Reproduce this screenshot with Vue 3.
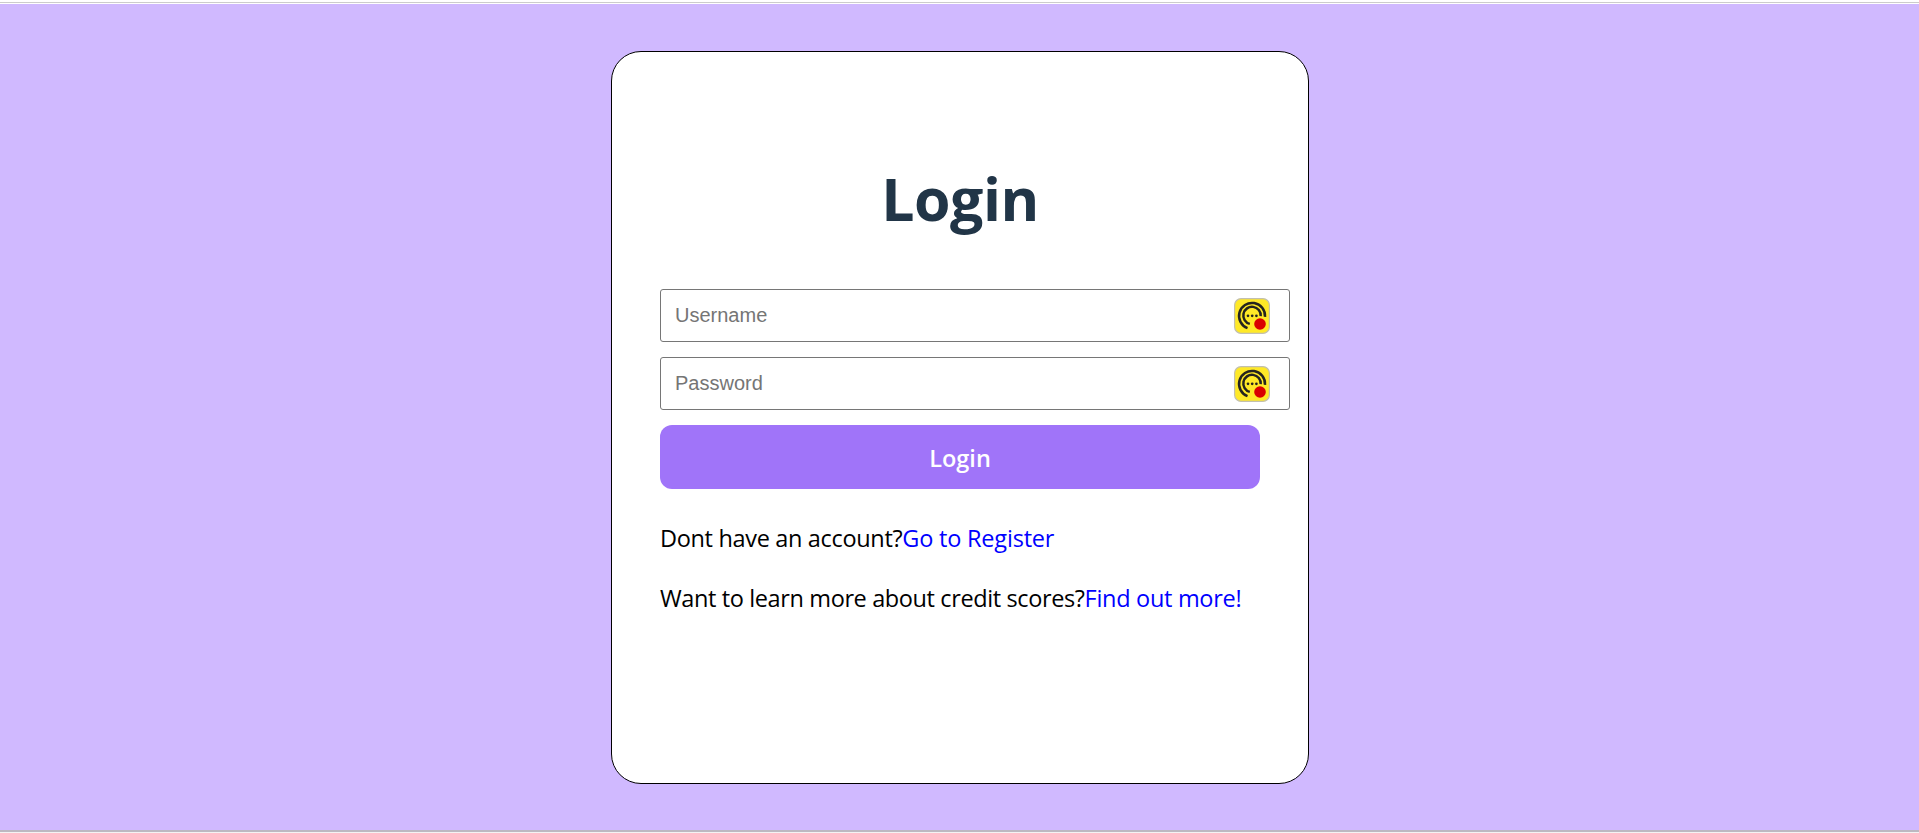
<template>
  <div class="page">
    <div class="login-card">
      <h1>Login</h1>
      <form @submit.prevent="login">
        <div v-for="field in fields" :key="field.name" class="field">
          <input :type="field.type" :placeholder="field.label" v-model="credentials[field.name]" />
          <svg class="key-icon" viewBox="0 0 36 36" fill="none">
            <rect x="0.6" y="0.6" width="34.8" height="34.8" rx="6.5" fill="#ffe927" stroke="#c3c0ae" stroke-width="1.2" />
            <g stroke="#25241f" stroke-width="2.5">
              <path d="M13.5 30.1A13 13 0 1 1 31 18.8" />
              <path d="M15.8 25.9A8.7 8.7 0 1 1 26.7 18.2" />
            </g>
            <g fill="#25241f">
              <circle cx="14" cy="17.8" r="1.35" />
              <circle cx="18.2" cy="17.8" r="1.35" />
              <circle cx="22.4" cy="17.8" r="1.35" />
            </g>
            <circle cx="26" cy="26" r="5.8" fill="#d90000" />
          </svg>
        </div>
        <button type="submit">Login</button>
      </form>
      <p><span class="question-register">Dont have an account?</span><a class="link-register" href="#">Go to Register</a></p>
      <p><span class="question-scores">Want to learn more about credit scores?</span><a class="link-scores" href="#">Find out more!</a></p>
    </div>
  </div>
</template>

<script setup>
import { reactive } from 'vue'

const fields = [
  { name: 'username', label: 'Username', type: 'text' },
  { name: 'password', label: 'Password', type: 'password' },
]

const credentials = reactive({ username: '', password: '' })

const emit = defineEmits(['login'])

function login(){
  emit('login', { ...credentials })
}
</script>

<style>
body {
  margin: 0;
  background: #fff;
}
</style>

<style scoped>
.page {
  height: 833px;
  box-sizing: border-box;
  display: flex;
  flex-direction: column;
  align-items: center;
  padding-top: 47px;
  background: #d0b9ff;
  border-top: 4px solid #fff;
  border-bottom: 3px solid #bdb8c1;
  font-family: "Segoe UI", "Open Sans", "Noto Sans", sans-serif;
  position: relative;
}
/* divider lines above and below the page */
.page::before {
  content: "";
  position: absolute;
  top: -2px;
  left: 0;
  right: 0;
  height: 1px;
  background: #ccc;
}
.page::after {
  content: "";
  position: absolute;
  bottom: -3px;
  left: 0;
  right: 0;
  height: 1px;
  background: #f3f3f3;
}
.login-card {
  width: 698px;
  height: 733px;
  box-sizing: border-box;
  margin-left: 1px;
  padding: 106px 48px 0;
  background: #fff;
  border: 1px solid #000;
  border-radius: 30px;
}
h1 {
  margin: 0 0 51px;
  font-size: 59px;
  line-height: 80px;
  font-weight: 700;
  letter-spacing: -0.5px;
  text-align: center;
  color: #213547;
}
form {
  display: flex;
  flex-direction: column;
  gap: 15px;
}
.field {
  position: relative;
  width: 630px;
  height: 53px;
}
.field > input {
  width: 100%;
  height: 100%;
  box-sizing: border-box;
  padding: 0 14px;
  border: 1px solid #767676;
  border-radius: 3px;
  background: #fff;
  font-family: "Liberation Sans", Arial, sans-serif;
  font-size: 20px;
}
.field > input::placeholder {
  color: #757575;
}
.key-icon {
  position: absolute;
  top: 9px;
  right: 20px;
  width: 36px;
  height: 36px;
}
button {
  width: 600px;
  height: 64px;
  padding: 1px 0 0;
  border: none;
  border-radius: 12px;
  background: #a074f9;
  color: #fff;
  font-family: inherit;
  font-size: 23.5px;
  font-weight: 600;
}
p {
  margin: 0;
  font-size: 23.5px;
  line-height: 32px;
  white-space: nowrap;
}
form + p {
  margin: 33px 0 28px;
}
a {
  color: #0000ff;
  text-decoration: none;
}
.question-register {
  letter-spacing: -0.33px;
}
.link-register {
  letter-spacing: -0.2px;
}
.question-scores {
  letter-spacing: -0.38px;
}
.link-scores {
  letter-spacing: -0.3px;
}
</style>
